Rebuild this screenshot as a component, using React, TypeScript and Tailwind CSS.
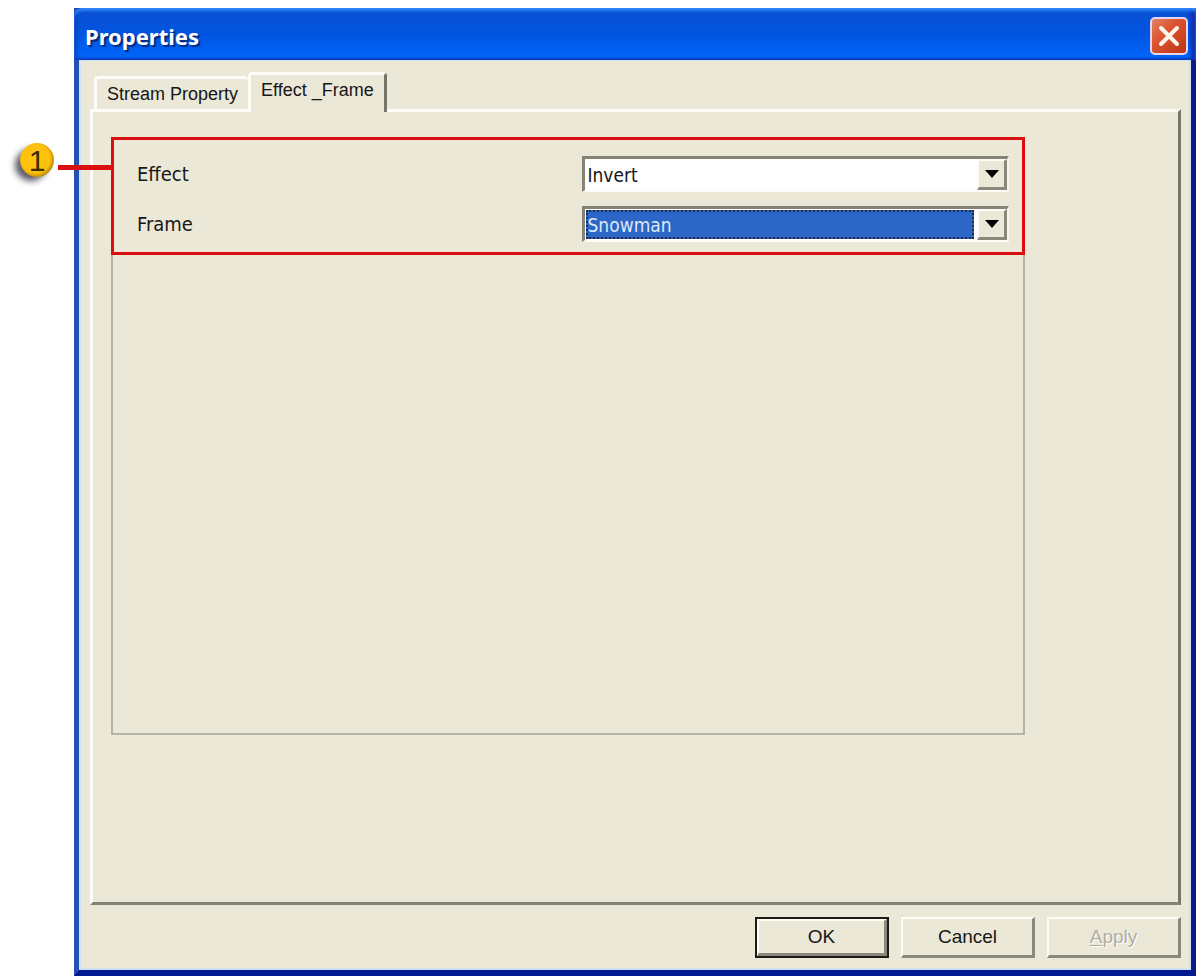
import { useState } from "react";

const text = "font-['DejaVu_Sans_Condensed','DejaVu_Sans',sans-serif]";

const raised =
  "border-t-2 border-l-2 border-r-[3px] border-b-[3px] border-t-[#fdfcf6] border-l-[#fdfcf6] border-r-[#8a877b] border-b-[#8a877b]";

function CloseIcon() {
  return (
    <svg viewBox="0 0 38 38" className="size-[38px]" aria-hidden="true">
      <defs>
        <linearGradient id="close-fill" x1="0" y1="0" x2="1" y2="1">
          <stop offset="0" stopColor="#e2886f" />
          <stop offset="0.4" stopColor="#dc5431" />
          <stop offset="1" stopColor="#b93413" />
        </linearGradient>
      </defs>
      <rect x="1" y="1" width="36" height="36" rx="4" fill="url(#close-fill)" stroke="#e3d6ee" strokeWidth="2" />
      <path d="M11 11 L27 27 M27 11 L11 27" stroke="#fff6ea" strokeWidth="4" strokeLinecap="round" />
    </svg>
  );
}

function Callout() {
  return (
    <div className="pointer-events-none absolute top-0 right-full flex items-center" aria-hidden="true">
      <svg viewBox="0 0 50 54" className="h-[54px] w-[50px] shrink-0">
        <defs>
          <radialGradient id="ball" cx="0.45" cy="0.45" r="0.6">
            <stop offset="0" stopColor="#ffc60a" />
            <stop offset="0.72" stopColor="#fcc010" />
            <stop offset="1" stopColor="#a87800" />
          </radialGradient>
          <filter id="soft" x="-40%" y="-40%" width="180%" height="180%">
            <feGaussianBlur stdDeviation="3" />
          </filter>
        </defs>
        <circle cx="23" cy="25" r="16" fill="#26263a" opacity="0.75" filter="url(#soft)" />
        <circle cx="29" cy="20" r="17" fill="url(#ball)" />
        <text x="29" y="31" fontSize="30" textAnchor="middle" fill="#3a2d00" fontFamily="Liberation Sans, sans-serif">
          1
        </text>
      </svg>
      <span className="h-[5px] w-[56px] bg-[#d90f12]" />
    </div>
  );
}

interface ComboProps {
  id: string;
  label: string;
  options: string[];
  initial: string;
  selected?: boolean;
}

function ComboRow({ id, label, options, initial, selected }: ComboProps) {
  const [value, setValue] = useState(initial);
  return (
    <div className="flex items-center">
      <label htmlFor={id} className="w-1/2 pl-[23px] text-xl leading-6 text-[#161616]">
        {label}
      </label>
      <div className="relative ml-5 h-9 flex-1 border-t-[3px] border-r-2 border-b-2 border-l-[3px] border-t-[#858276] border-r-[#f8f6ec] border-b-[#fdfcf6] border-l-[#858276] bg-white p-px">
        <select
          id={id}
          value={value}
          onChange={(e) => setValue(e.target.value)}
          className={
            selected
              ? "block h-full w-[calc(100%-32px)] appearance-none border-2 border-dotted border-[#1d2a4c] bg-[#2c66c6] text-[19px] leading-6 text-[#dce9f8] outline-none"
              : "block h-full w-full appearance-none bg-white pl-[2px] text-[19px] leading-6 text-[#161616] outline-none"
          }
        >
          {options.map((o) => (
            <option key={o}>{o}</option>
          ))}
        </select>
        <span className={`pointer-events-none absolute inset-y-0 right-0 flex w-[30px] items-center justify-center bg-[#ebe8d8] ${raised}`}>
          <svg viewBox="0 0 14 8" className="h-2 w-[14px]" aria-hidden="true">
            <path d="M0 0 H14 L7 8 Z" fill="#000" />
          </svg>
        </span>
      </div>
    </div>
  );
}

export default function App() {
  return (
    <main className={`flex min-h-screen flex-col bg-white pt-2 pr-2 pl-[74px] ${text}`}>
      <section className="flex flex-1 flex-col border-r-[5px] border-b-[6px] border-l-[5px] border-r-[#0b1d85] border-b-[#001a94] border-l-[#2550b4] bg-[#0b1d85]">
        <header className="-mx-[5px] flex h-[52px] items-center justify-between rounded-tl-lg bg-linear-to-b from-[#0a50d0] via-[#0054e0] to-[#0068ff] pr-2 pl-[11px] shadow-[inset_0_3px_3px_#2f86fa,inset_-5px_0_4px_#1228a8,inset_3px_0_3px_#0a40b8,inset_0_-2px_1px_#0a50d0]">
          <h1 className="pt-1 font-['Noto_Sans',sans-serif] text-[22px] leading-8 font-bold text-white [text-shadow:2px_2px_1px_#0a2a7c]">
            Properties
          </h1>
          <button type="button" aria-label="Close" className="mt-1 rounded">
            <CloseIcon />
          </button>
        </header>

        <div className="flex flex-1 flex-col border-2 border-t-[1px] border-[#cfe2f5] bg-[#ebe8d8] pt-[11px] pr-2 pb-[10px] pl-[9px]">
          <div role="tablist" className="flex items-end pl-1 font-['Liberation_Sans',sans-serif] text-lg leading-6 text-[#161616]">
            <button
              type="button"
              role="tab"
              aria-selected="false"
              className="h-[33px] rounded-t-sm border-t-[3px] border-l-[3px] border-[#fdfcf6] px-[10px]"
            >
              Stream Property
            </button>
            <button
              type="button"
              role="tab"
              aria-selected="true"
              className="relative z-10 -mb-[3px] flex h-10 rounded-t-sm border-t-[3px] border-r-[3px] border-l-[3px] border-t-[#fdfcf6] border-r-[#77746a] border-l-[#fdfcf6] bg-[#ebe8d8] px-[10px] pt-[3px]"
            >
              Effect _Frame
            </button>
          </div>

          <div
            role="tabpanel"
            className="flex flex-1 flex-col border-[3px] border-t-[#fdfcf6] border-r-[#77746a] border-b-[#858276] border-l-[#fdfcf6] pt-[25px] pr-[153px] pb-[167px] pl-[18px]"
          >
            <div className="flex flex-1 flex-col border-2 border-t-0 border-[#b5b2a6]">
              <div className="relative -mx-[2px] flex flex-col gap-[14px] border-[3px] border-[#d90f12] pt-4 pr-[13px] pb-[10px]">
                <Callout />
                <ComboRow id="effect" label="Effect" initial="Invert" options={["Invert", "None"]} />
                <ComboRow id="frame" label="Frame" initial="Snowman" options={["Snowman", "None"]} selected />
              </div>
            </div>
          </div>

          <footer className="mt-3 flex justify-end gap-3 font-['Liberation_Sans',sans-serif] text-[19px] leading-6 text-[#161616]">
            <button type="button" className="h-[41px] w-[134px] border-2 border-[#1c1b18]">
              <span className={`flex h-full items-center justify-center ${raised}`}>OK</span>
            </button>
            <button type="button" className={`h-[41px] w-[134px] ${raised}`}>
              Cancel
            </button>
            <button
              type="button"
              disabled
              className={`h-[41px] w-[134px] text-[#b0ada0] [text-shadow:1px_1px_0_#fff] ${raised}`}
            >
              <span className="underline underline-offset-2">A</span>pply
            </button>
          </footer>
        </div>
      </section>
    </main>
  );
}
